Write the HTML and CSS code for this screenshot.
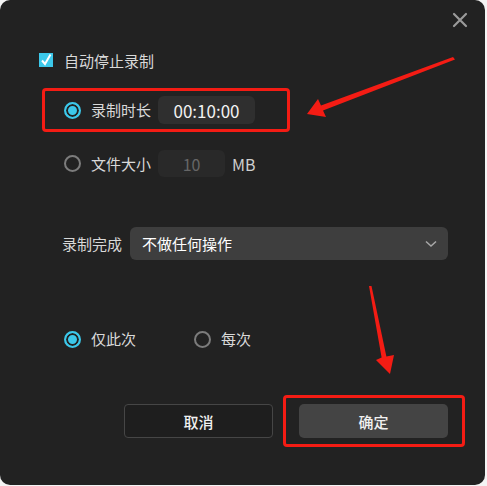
FILE: index.html
```html
<!DOCTYPE html>
<html lang="zh-CN">
<head>
    <meta charset="UTF-8">
    <title>自动停止录制</title>
    <link rel="stylesheet" href="styles.css">
</head>
<body>

    <div class="dialog">
        <!-- Title bar -->
        <div class="header">
            <button class="close-button">
                <svg width="16" height="16" viewBox="0 0 16 16">
                    <path d="M2 2 L14 14 M14 2 L2 14" stroke="#9a9a9a" stroke-width="2.2" stroke-linecap="round"/>
                </svg>
            </button>
        </div>

        <label class="check-row">
            <span class="checkbox">
                <svg width="14" height="14" viewBox="0 0 14 14">
                    <path d="M3 7.5 L6 11 L11.5 1.5" stroke="#fff" stroke-width="2" fill="none"/>
                </svg>
            </span>
            <span>自动停止录制</span>
        </label>

        <div class="mark-box">
            <div class="radio-row">
                <span class="radio checked"></span>
                <span class="label">录制时长</span>
                <span class="time-input">00:10:00</span>
            </div>
        </div>

        <div class="radio-row size-row">
            <span class="radio"></span>
            <span class="label">文件大小</span>
            <span class="size-input">10</span>
            <span class="unit">MB</span>
        </div>

        <div class="select-row">
            <span class="label">录制完成</span>
            <div class="select">
                <span>不做任何操作</span>
                <svg width="12" height="8" viewBox="0 0 12 8">
                    <path d="M1 1.5 L6 6 L11 1.5" stroke="#a8a8a8" stroke-width="1.5" fill="none"/>
                </svg>
            </div>
        </div>

        <div class="scope-row">
            <span class="radio checked"></span>
            <span class="label">仅此次</span>
            <span class="radio every"></span>
            <span class="label">每次</span>
        </div>

        <div class="button-row">
            <button class="cancel-button">取消</button>
            <div class="mark-box confirm-box">
                <button class="confirm-button">确定</button>
            </div>
        </div>

        <!-- Annotation arrows -->
        <svg class="arrows" width="487" height="486" viewBox="0 0 487 486">
            <polygon fill="#f41c14" points="453,57 455,59.5 323,110.5 326,117 307,114 318,99 321,105.5"/>
            <polygon fill="#f41c14" points="369,286 371.5,286 386.4,356.4 394,355 390,374 376,360 381.6,357.6"/>
        </svg>
    </div>

</body>
</html>
```

FILE: styles.css
```css
* {
    margin: 0;
    padding: 0;
    box-sizing: border-box;
}

body {
    background-color: #f4f4f4;
    font-family: "Noto Sans CJK SC", "Noto Sans", sans-serif;
    color: #d9d9d9;
    font-size: 15px;
}

.dialog {
    position: relative;
    width: 485px;
    height: 485px;
    background-color: #222222;
    border-radius: 10px;
    padding-left: 39px;
}

.header {
    height: 40px;
    display: flex;
    justify-content: flex-end;
    align-items: center;
    padding-right: 17px;
}

.close-button {
    background: none;
    border: none;
    width: 16px;
    height: 16px;
    display: flex;
    cursor: pointer;
}

.check-row {
    margin-top: 10px;
    height: 20px;
    display: flex;
    align-items: center;
    gap: 11px;
}

.checkbox {
    width: 14px;
    height: 14px;
    background-color: #3cc8ea;
    display: flex;
}

.mark-box {
    border: 3px solid #f41c14;
    border-radius: 4px;
}

.dialog > .mark-box {
    margin-top: 18px;
    margin-left: 3px;
    width: 248px;
    height: 44px;
    padding-left: 19px;
    display: flex;
    align-items: center;
}

.radio-row {
    display: flex;
    align-items: center;
}

.radio {
    width: 17px;
    height: 17px;
    border-radius: 50%;
    border: 2px solid #7c7c7c;
    margin-right: 10px;
    flex-shrink: 0;
}

.radio.checked {
    border: 2px solid #3cc8ea;
    background-color: #3cc8ea;
    box-shadow: inset 0 0 0 2px #222222;
}

.label {
    line-height: 20px;
}

.time-input {
    margin-left: 7px;
    width: 97px;
    height: 28px;
    background-color: #2f2f2f;
    border-radius: 6px;
    color: #f2f2f2;
    font-size: 17px;
    display: flex;
    justify-content: center;
    align-items: center;
}

.size-row {
    margin-top: 18px;
    margin-left: 25px;
    height: 27px;
}

.size-input {
    margin-left: 7px;
    width: 67px;
    height: 27px;
    background-color: #292929;
    border-radius: 6px;
    color: #666;
    font-size: 16px;
    display: flex;
    justify-content: center;
    align-items: center;
}

.unit {
    margin-left: 7px;
    font-size: 16px;
    color: #cfcfcf;
}

.select-row {
    margin-top: 50px;
    margin-left: 23px;
    display: flex;
    align-items: center;
    gap: 8px;
}

.select {
    width: 318px;
    height: 33px;
    background-color: #3e3e3e;
    border-radius: 6px;
    display: flex;
    align-items: center;
    justify-content: space-between;
    padding: 0 11px 0 12px;
    color: #fff;
    font-size: 15px;
}

.scope-row {
    margin-top: 69px;
    margin-left: 25px;
    height: 20px;
    display: flex;
    align-items: center;
}

.radio.every {
    margin-left: 58px;
}

.button-row {
    margin-top: 46px;
    margin-left: 85px;
    display: flex;
    align-items: center;
}

.cancel-button {
    width: 149px;
    height: 34px;
    background-color: #1e1e1e;
    border: 1px solid #464646;
    border-radius: 4px;
    color: #f0f0f0;
    font-family: inherit;
    font-size: 15px;
    font-weight: 500;
    cursor: pointer;
}

.confirm-box {
    margin-left: 10px;
    width: 182px;
    height: 52px;
    padding: 0 0 0 13px;
    display: flex;
    align-items: center;
}

.confirm-button {
    width: 149px;
    height: 34px;
    background-color: #444444;
    border: none;
    border-radius: 5px;
    color: #f0f0f0;
    font-family: inherit;
    font-size: 15px;
    font-weight: 500;
    cursor: pointer;
}

.arrows {
    position: absolute;
    top: 0;
    left: 0;
    pointer-events: none;
}
```
